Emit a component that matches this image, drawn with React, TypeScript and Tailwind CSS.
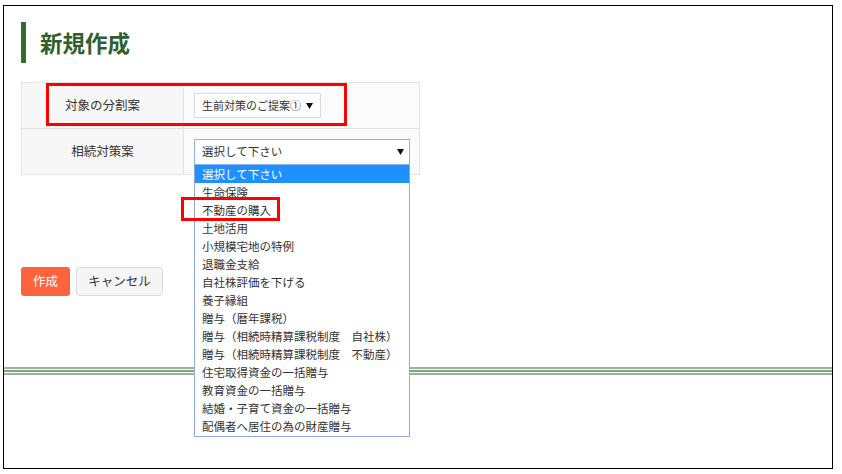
import React from 'react';

const options = [
  '選択して下さい',
  '生命保険',
  '不動産の購入',
  '土地活用',
  '小規模宅地の特例',
  '退職金支給',
  '自社株評価を下げる',
  '養子縁組',
  '贈与（暦年課税）',
  '贈与（相続時精算課税制度　自社株）',
  '贈与（相続時精算課税制度　不動産）',
  '住宅取得資金の一括贈与',
  '教育資金の一括贈与',
  '結婚・子育て資金の一括贈与',
  '配偶者へ居住の為の財産贈与',
];

const Caret = () => (
  <svg width="7" height="6" viewBox="0 0 7 6" className="shrink-0">
    <path d="M0 0h7L3.5 6z" fill="#111" />
  </svg>
);

export default function App() {
  return (
    <div
      className="w-[842px] h-[474px] bg-white pt-[5px] pl-[3px]"
      style={{ fontFamily: '"Noto Sans CJK JP", "Noto Sans", sans-serif' }}
    >
      <div className="relative w-[830px] h-[464px] border border-black">
        <div className="pt-[16px] pl-[17px]">
          {/* Title */}
          <div className="h-[41px] border-l-[5px] border-[#336b34] pl-[14px] flex items-center">
            <h1 className="text-[22.5px] font-bold text-[#2f5f2f] leading-none">新規作成</h1>
          </div>

          {/* Form table */}
          <div className="mt-[19px] w-[399px] border border-[#e3e3e3] text-[12.5px] text-[#333]">
            <div className="flex h-[46px] border-b border-[#e3e3e3]">
              <div className="w-[162px] bg-[#f7f7f7] border-r border-[#e3e3e3] flex items-center justify-center">
                対象の分割案
              </div>
              <div className="flex-1 bg-[#fbfbfb] flex items-center pl-[10px]">
                <div className="w-[127px] h-[25px] border border-[#dcdcdc] bg-white flex items-center justify-between pl-[7px] pr-[7px]">
                  <span className="text-[11px] whitespace-nowrap">生前対策のご提案①</span>
                  <Caret />
                </div>
              </div>
            </div>
            <div className="flex h-[45px]">
              <div className="w-[162px] bg-[#f7f7f7] border-r border-[#e3e3e3] flex items-center justify-center">
                相続対策案
              </div>
              <div className="flex-1 bg-[#fbfbfb] flex items-center pl-[10px]">
                <div className="relative w-[216px]">
                  <div className="h-[26px] border border-[#8fb1ea] bg-white flex items-center justify-between pl-[7px] pr-[5px]">
                    <span className="text-[11.5px]">選択して下さい</span>
                    <Caret />
                  </div>
                  <ul className="absolute left-0 top-full w-full bg-white border border-[#8fa9dc] border-t-0 pb-[1px] z-10 text-[11.5px] text-[#333]">
                    {options.map((o, i) => (
                      <li
                        key={o}
                        className={
                          'h-[18px] leading-[18px] pl-[7px] whitespace-nowrap ' +
                          (i === 0 ? 'bg-[#1e90ff] text-white' : '')
                        }
                      >
                        {o}
                      </li>
                    ))}
                  </ul>
                </div>
              </div>
            </div>
          </div>

          {/* Buttons */}
          <div className="mt-[92px] flex gap-[6px]">
            <button className="w-[49px] h-[29px] rounded-[3px] bg-[#fd643e] text-white text-[12.5px]">作成</button>
            <button className="w-[87px] h-[29px] rounded-[3px] bg-[#f5f5f5] border border-[#dcdcdc] text-[#333] text-[12.5px]">
              キャンセル
            </button>
          </div>
        </div>

        {/* Green divider */}
        <div className="mt-[71px] flex flex-col gap-px">
          <div className="h-[2px] bg-[#95b595]" />
          <div className="h-[2px] bg-[#7fa57f]" />
          <div className="h-[2px] bg-[#95b595]" />
        </div>

        {/* Annotation boxes */}
        <div className="absolute left-[42px] top-[77px] w-[301px] h-[43px] border-[3px] border-[#f00] pointer-events-none" />
        <div className="absolute left-[177px] top-[191px] w-[99px] h-[24px] border-[3px] border-[#f00] z-20 pointer-events-none" />
      </div>
    </div>
  );
}
